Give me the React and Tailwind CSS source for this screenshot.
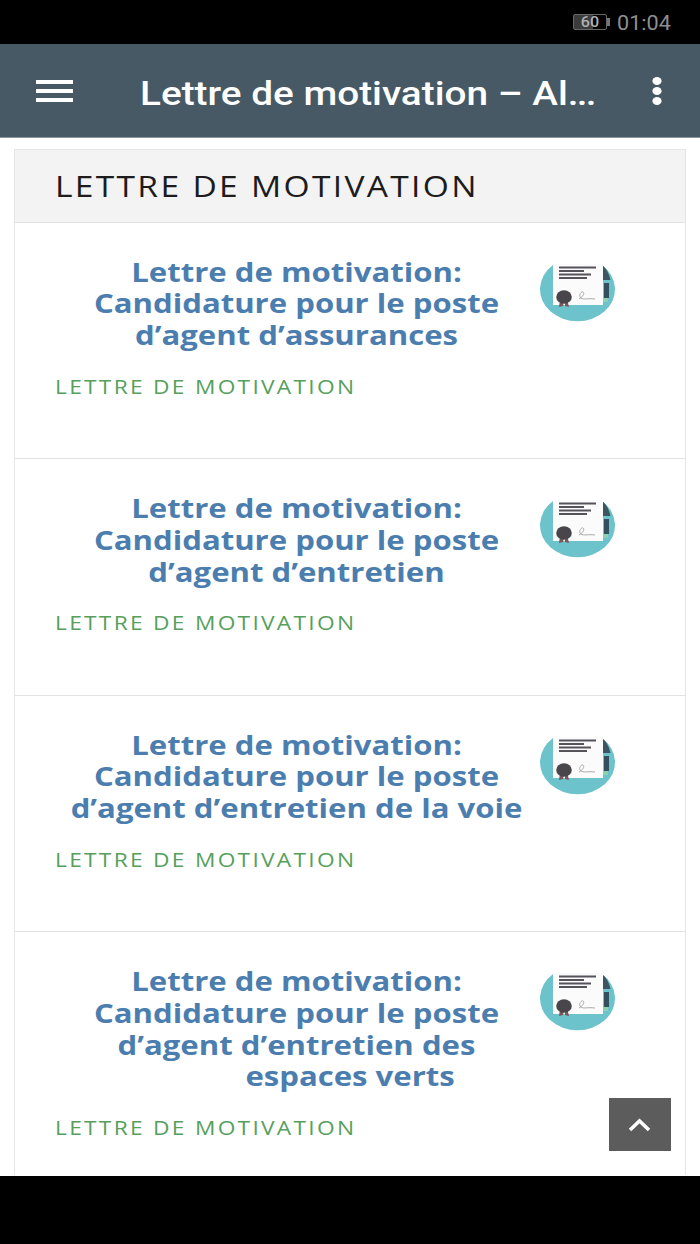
import React from 'react';

const letters = [
  { id: 1, lines: ['Lettre de motivation:', 'Candidature pour le poste', 'd’agent d’assurances'] },
  { id: 2, lines: ['Lettre de motivation:', 'Candidature pour le poste', 'd’agent d’entretien'] },
  { id: 3, lines: ['Lettre de motivation:', 'Candidature pour le poste', 'd’agent d’entretien de la voie'] },
  { id: 4, lines: ['Lettre de motivation:', 'Candidature pour le poste', 'd’agent d’entretien des'], lastLine: 'espaces verts' },
];

function StatusBar() {
  return (
    <div className="h-11 shrink-0 bg-black flex items-center justify-end pr-[29px] font-['Roboto',sans-serif] text-[#8f8f8f]">
      <div className="flex items-center mr-[7px]">
        <div className="w-[34px] h-4 rounded-xs border border-[#666] bg-gradient-to-r from-[#3c3c3c] from-60% to-black to-60% flex items-center justify-center text-sm font-medium text-[#b0b0b0]">
          <span className="scale-x-115">60</span>
        </div>
        <div className="w-[3px] h-2 bg-[#777]" />
      </div>
      <span className="w-[54px] pt-0.5 text-[20px] whitespace-nowrap">
        <span className="inline-block origin-left scale-x-[1.08]">01:04</span>
      </span>
    </div>
  );
}

function Toolbar() {
  return (
    <header className="h-[94px] shrink-0 bg-[#465965] border-b border-[#8a959c] flex items-center text-white">
      <button className="ml-9 w-[37px] flex flex-col gap-[5px]">
        <span className="h-1 w-full bg-white" />
        <span className="h-1 w-full bg-white" />
        <span className="h-1 w-full bg-white" />
      </button>
      <h1 className="ml-[67px] mt-[7px] w-[479px] whitespace-nowrap font-['Roboto',sans-serif] font-medium text-[33px] leading-10">
        <span className="inline-block origin-left scale-x-[1.174]">
          Lettre de motivation – Al<span className="tracking-[-1.500px]">...</span>
        </span>
      </h1>
      <button className="ml-[33px]">
        <svg width="10" height="28" viewBox="0 0 10 28" fill="currentColor">
          <ellipse cx="5" cy="4" rx="4.6" ry="4" />
          <ellipse cx="5" cy="14" rx="4.6" ry="4" />
          <ellipse cx="5" cy="24" rx="4.6" ry="4" />
        </svg>
      </button>
    </header>
  );
}

// Round certificate thumbnail
function CertificateIcon() {
  return (
    <svg className="mt-1.5" width="76" height="60" viewBox="0 0 76 60">
      <path d="M13 3A37.500 32 0 1 0 62 3z" fill="#6cc3cb" />
      <path d="M62 3c4 3 7 8 8.500 15H63z" fill="#3d5560" />
      <path d="M64 21h5v15h-5z" fill="#34505c" />
      <path d="M63 36h5v4h-5z" fill="#8bd0b0" />
      <path d="M13 2h50v41H13z" fill="#fbfbfb" />
      <path d="M19 4.500h37v2H19zM19 8h25v2H19zM19 11.500h32v2H19zM19 15h28v2H19z" fill="#55525a" />
      <path d="M20 38l-1 7 4-1 1-5zM25 38l0 6 4 1-2-8z" fill="#7b555a" />
      <ellipse cx="24" cy="35" rx="7.800" ry="6.800" fill="#48464b" />
      <path d="M39 37c4-2 6-6 4-7s-5 4-2 6 6 0 14 1" fill="none" stroke="#aaa" strokeWidth="1" />
    </svg>
  );
}

function LetterItem({ letter }) {
  return (
    <article className="border-b border-[#e3e3e3] h-[236.600px] pl-10 pr-[69px] pt-[33px] last:h-[243px] last:border-b-0">
      <div className="flex justify-between">
        <h3 className="w-[483px] scale-x-[1.152] text-center font-bold text-[27px] leading-[31.700px] text-[#4b7eaf] whitespace-nowrap">
          {letter.lines.map((line) => (
            <span key={line} className="block">{line}</span>
          ))}
          {letter.lastLine && <span className="block pl-[93px]">{letter.lastLine}</span>}
        </h3>
        <CertificateIcon />
      </div>
      <p className="mt-6 text-xl leading-6 tracking-[2px] text-[#56a05c]">
        <span className="inline-block origin-left scale-x-[1.137]">LETTRE DE MOTIVATION</span>
      </p>
    </article>
  );
}

function App() {
  return (
    <div className="relative h-[1244px] w-[700px] overflow-hidden bg-white flex flex-col font-['Open_Sans',sans-serif]">
      <StatusBar />
      <Toolbar />
      <main className="flex-1 overflow-hidden px-3.5 pt-[10.500px]">
        <section className="border-x border-t border-[#e6e6e6]">
          <h2 className="h-[73px] bg-[#f3f3f3] border-b border-[#e3e3e3] pl-10 text-[29px] leading-[72px] tracking-[2px] text-[#1c1c1c]">
            <span className="inline-block origin-left scale-x-[1.157]">LETTRE DE MOTIVATION</span>
          </h2>
          {letters.map((letter) => (
            <LetterItem key={letter.id} letter={letter} />
          ))}
        </section>
      </main>
      <footer className="h-[68px] shrink-0 bg-black" />
      <button className="absolute left-[609px] top-[1098px] w-[62px] h-[53px] bg-[#5c5c5c] flex items-center justify-center">
        <svg width="24" height="14" viewBox="0 0 24 14" fill="none" stroke="white" strokeWidth="3.500">
          <path d="M2 12l9.500-9 9.500 9" />
        </svg>
      </button>
    </div>
  );
}

export default App;
